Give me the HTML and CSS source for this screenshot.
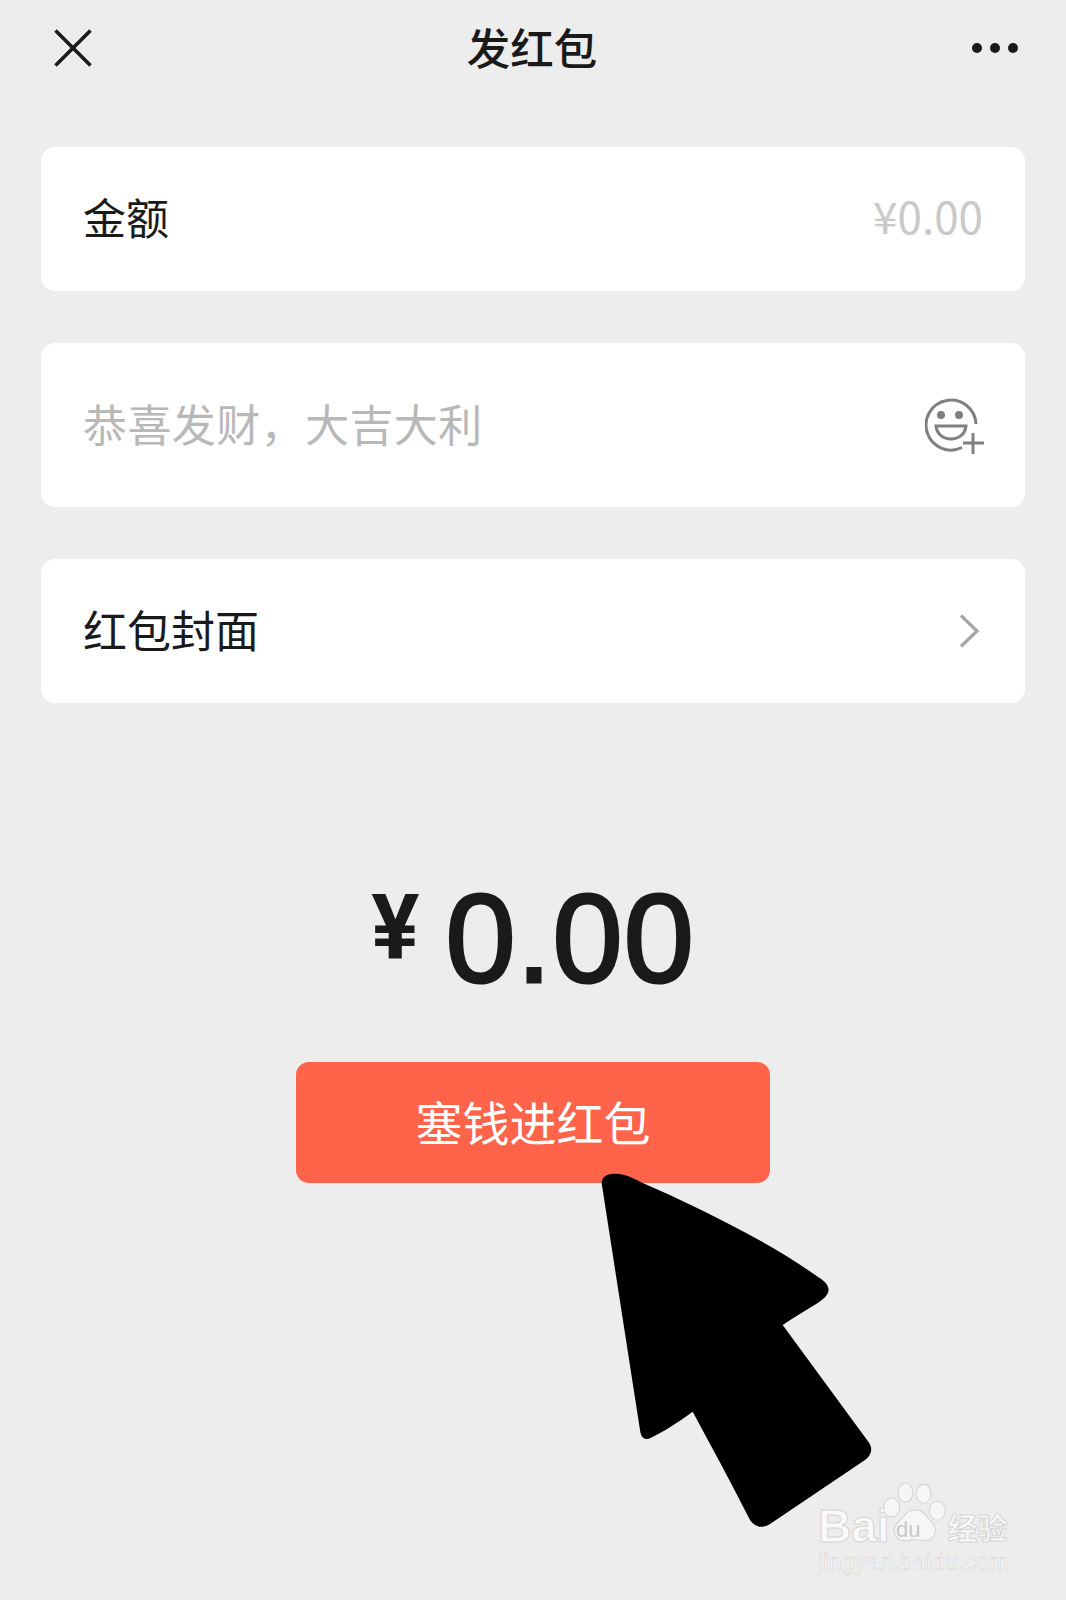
FILE: index.html
```html
<!DOCTYPE html>
<html lang="zh-CN">
<head>
    <meta charset="UTF-8">
    <meta name="viewport" content="width=device-width, initial-scale=1.0">
    <title>发红包</title>
    <link rel="stylesheet" href="styles.css">
</head>
<body>
    <div class="page">
        <div class="header">
            <svg class="close" width="38" height="38" viewBox="0 0 38 38">
                <path d="M1.5 1.5L36.5 36.5M36.5 1.5L1.5 36.5" stroke="#1a1a1a" stroke-width="3.6" fill="none"/>
            </svg>
            <h1 class="title">发红包</h1>
            <div class="more"><i></i><i></i><i></i></div>
        </div>

        <div class="card card-amount">
            <span class="label">金额</span>
            <span class="amount-hint">¥0.00</span>
        </div>

        <div class="card card-wish">
            <span class="placeholder">恭喜发财，大吉大利</span>
            <svg class="emoji" width="60" height="58" viewBox="0 0 60 58">
                <path d="M37 50.500A25 25 0 1 1 51 27" fill="none" stroke="#808080" stroke-width="3"/>
                <circle cx="16" cy="18" r="4" fill="#808080"/>
                <circle cx="34" cy="18" r="4" fill="#808080"/>
                <path d="M11 29H41C40 38 33 42 26 42C19 42 12 38 11 29Z" fill="none" stroke="#808080" stroke-width="3"/>
                <path d="M38 46H59M48 36V57" fill="none" stroke="#808080" stroke-width="3"/>
            </svg>
        </div>

        <div class="card card-cover">
            <span class="label">红包封面</span>
            <svg class="chevron" width="20" height="34" viewBox="0 0 20 34">
                <path d="M2 1.500L18 17L2 32.500" fill="none" stroke="#a6a6a6" stroke-width="3.200"/>
            </svg>
        </div>

        <div class="total">
            <span class="total-sign">¥</span>
            <span class="total-num">0.00</span>
        </div>

        <button class="submit">塞钱进红包</button>
    </div>

    <!-- annotation arrow on top of the screenshot -->
    <svg class="arrow" width="330" height="400" viewBox="0 0 990 1200">
        <path d="M125 100C125 75 150 70 175 72C195 73 215 82 240 95C400 165 620 270 780 385C805 402 815 420 795 442C770 465 720 490 668 525L925 875C940 895 935 915 915 930L630 1122C605 1138 585 1130 570 1110C520 1010 460 900 398 785C350 820 310 845 270 865C250 872 243 860 240 840Z" fill="#000"/>
    </svg>

    <!-- watermark -->
    <div class="mark">
        <div class="mark-top">
            <span class="mark-bai">Bai</span>
            <svg class="mark-paw" width="66" height="66" viewBox="0 0 62 62">
                <g fill="#f6f6f6" stroke="#d4d4d4" stroke-width="1">
                    <ellipse cx="22" cy="10" rx="7" ry="9"/>
                    <ellipse cx="39" cy="11" rx="7" ry="9"/>
                    <ellipse cx="9" cy="24" rx="7.500" ry="9"/>
                    <ellipse cx="52" cy="27" rx="7.500" ry="9"/>
                    <path d="M31 26C39 26 42 33 47 38C53 44 50 56 39 55C33 54 28 54 23 55C12 56 8 45 15 38C21 33 23 26 31 26Z"/>
                </g>
            </svg>
            <span class="mark-du">du</span>
            <span class="mark-jy">经验</span>
        </div>
        <div class="mark-url">jingyan.baidu.com</div>
    </div>
</body>
</html>
```

FILE: styles.css
```css
* {
    padding: 0;
    margin: 0;
    box-sizing: border-box;
}

body {
    background-color: #ededed;
    font-family: "Noto Sans CJK SC", "Liberation Sans", sans-serif;
    color: #1a1a1a;
    height: 1600px;
    overflow: hidden;
    position: relative;
}

.page {
    padding: 0 41px;
    display: flex;
    flex-direction: column;
}

.header {
    height: 98px;
    margin-bottom: 49px;
    padding: 0 7px 2px 13px;
    display: flex;
    align-items: center;
    justify-content: space-between;
}

.title {
    font-size: 43.500px;
    font-weight: 500;
    line-height: 1;
    margin-bottom: 2px;
}

.more {
    display: flex;
    gap: 8px;
}

.more i {
    width: 10px;
    height: 10px;
    border-radius: 50%;
    background-color: #1a1a1a;
}

.card {
    background-color: #fff;
    border-radius: 14px;
    padding: 0 42px;
    display: flex;
    align-items: center;
    justify-content: space-between;
    margin-bottom: 52px;
}

.card-amount,
.card-cover {
    height: 144px;
}

.card-wish {
    height: 164px;
}

.label {
    font-size: 44px;
    margin-bottom: 4px;
}

.card-amount .label {
    font-size: 43px;
    margin-bottom: 6px;
}

.amount-hint {
    font-size: 44px;
    color: #c9c9c9;
    margin-bottom: 8px;
}

.placeholder {
    font-size: 44px;
    letter-spacing: 0.4px;
    color: #b8b8b8;
    margin-bottom: 4px;
}

.emoji {
    margin-right: -2px;
    margin-top: 2px;
}

.chevron {
    margin-right: 4px;
}

.total {
    margin-top: 94px;
    height: 160px;
    display: flex;
    justify-content: center;
    align-items: flex-end;
    gap: 26px;
}

.total-sign {
    font-family: Roboto, sans-serif;
    font-size: 90px;
    font-weight: 700;
    line-height: 1;
    margin-bottom: 35px;
}

.total-num {
    font-family: "Liberation Sans", sans-serif;
    font-size: 126px;
    letter-spacing: 1px;
    line-height: 1;
    -webkit-text-stroke: 3px #1a1a1a;
    margin-bottom: 7px;
}

.submit {
    align-self: center;
    width: 474px;
    height: 121px;
    margin-top: 53px;
    padding-bottom: 4px;
    border: none;
    border-radius: 13px;
    background-color: #ff6349;
    color: #fff;
    font-family: inherit;
    font-size: 47px;
}

.arrow {
    position: absolute;
    left: 560px;
    top: 1150px;
}

.mark {
    position: absolute;
    left: 818px;
    top: 1484px;
    width: 200px;
    color: #f9f9f9;
}

.mark-top {
    display: flex;
    align-items: flex-end;
    height: 62px;
    position: relative;
}

.mark-bai {
    font-family: "Liberation Sans", sans-serif;
    font-size: 46px;
    font-weight: 700;
    line-height: 40px;
    -webkit-text-stroke: 1px #d4d4d4;
}

.mark-paw {
    margin-left: -8px;
    margin-bottom: -2px;
}

.mark-du {
    position: absolute;
    left: 78px;
    top: 34px;
    font-family: "Liberation Sans", sans-serif;
    font-size: 22px;
    line-height: 24px;
    color: #c8c8c8;
}

.mark-jy {
    font-size: 30px;
    font-weight: 700;
    line-height: 40px;
    -webkit-text-stroke: 1px #d4d4d4;
}

.mark-url {
    font-family: "Liberation Sans", sans-serif;
    font-size: 23.700px;
    line-height: 28px;
    margin-top: 2px;
    -webkit-text-stroke: 0.5px #cfcfcf;
    white-space: nowrap;
}
```
